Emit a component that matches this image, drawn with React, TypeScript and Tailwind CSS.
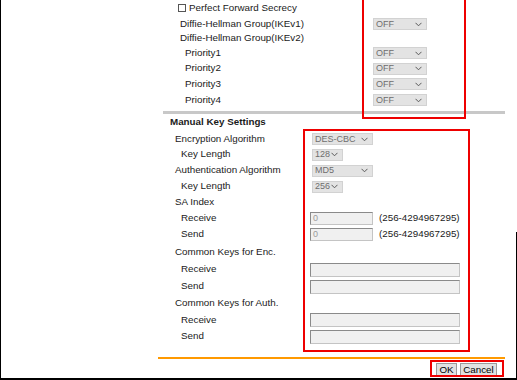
import React from 'react';

const Chevron = () => (
  <svg width="7" height="5" viewBox="0 0 7 5" className="shrink-0">
    <polyline points="0.5,0.8 3.5,3.8 6.5,0.8" fill="none" stroke="#5a5a5a" strokeWidth="1" />
  </svg>
);

function Select({ text, width }: { text: string; width: string }) {
  return (
    <div className={`${width} h-[12px] flex items-center justify-between bg-[#e3e3e3] border border-[#d2d2d2] pl-[2px] pr-[4px] text-[9px] text-[#6e6e6e] leading-none`}>
      <span>{text}</span>
      <Chevron />
    </div>
  );
}

function Input({ width, value }: { width: string; value?: string }) {
  return (
    <div className={`${width} flex items-center bg-[#f0f0f0] border border-[#8a8a8a] border-b-[#c4c4c4] border-r-[#c4c4c4] pl-[2px] text-[9px] text-[#9a9a9a] leading-none`}>
      {value}
    </div>
  );
}

function Row({ h, pad, label, bold, labelW, children }: { h: string; pad: string; label: React.ReactNode; bold?: boolean; labelW: string; children?: React.ReactNode }) {
  return (
    <div className={`flex items-center ${h}`}>
      <div className={`${labelW} ${pad} shrink-0 ${bold ? 'font-bold' : ''}`}>{label}</div>
      {children}
    </div>
  );
}

export default function App() {
  return (
    <div
      className="relative w-[517px] h-[380px] overflow-hidden bg-white border-l border-b-2 border-black text-[9.8px] text-[#1a1a1a]"
      style={{ fontFamily: '"Liberation Sans", Arial, sans-serif' }}
    >
      <div className="ml-[157px] w-[347px] flex flex-col">
        <div className="ml-[5px] flex flex-col">
          {/* IKE section */}
          <div className="flex items-center h-[16px] pl-[15px]">
            <div className="w-[8px] h-[8px] border border-[#555] mr-[3px] bg-white" />
            <span>Perfect Forward Secrecy</span>
          </div>
          <Row h="h-[16px]" pad="pl-[17px]" labelW="w-[210px]" label="Diffie-Hellman Group(IKEv1)">
            <Select text="OFF" width="w-[54px]" />
          </Row>
          <Row h="h-[13px]" pad="pl-[17px]" labelW="w-[210px]" label="Diffie-Hellman Group(IKEv2)" />
          <Row h="h-[16px]" pad="pl-[22px]" labelW="w-[210px]" label="Priority1">
            <Select text="OFF" width="w-[54px]" />
          </Row>
          <Row h="h-[15px]" pad="pl-[22px]" labelW="w-[210px]" label="Priority2">
            <Select text="OFF" width="w-[54px]" />
          </Row>
          <Row h="h-[16px]" pad="pl-[22px]" labelW="w-[210px]" label="Priority3">
            <Select text="OFF" width="w-[54px]" />
          </Row>
          <Row h="h-[16px]" pad="pl-[22px]" labelW="w-[210px]" label="Priority4">
            <Select text="OFF" width="w-[54px]" />
          </Row>

          <div className="mt-[3px] h-[3px] bg-[#c8c8c8]" />

          {/* Manual key section */}
          <Row h="h-[17px]" pad="pl-[7px]" labelW="w-[147px]" label="Manual Key Settings" bold />
          <Row h="h-[16px]" pad="pl-[12px]" labelW="w-[149px]" label="Encryption Algorithm">
            <Select text="DES-CBC" width="w-[61px]" />
          </Row>
          <Row h="h-[15px]" pad="pl-[18px]" labelW="w-[149px]" label="Key Length">
            <Select text="128" width="w-[31px]" />
          </Row>
          <Row h="h-[17px]" pad="pl-[12px]" labelW="w-[149px]" label="Authentication Algorithm">
            <Select text="MD5" width="w-[61px]" />
          </Row>
          <Row h="h-[15px]" pad="pl-[18px]" labelW="w-[149px]" label="Key Length">
            <Select text="256" width="w-[31px]" />
          </Row>
          <Row h="h-[16px]" pad="pl-[12px]" labelW="w-[147px]" label="SA Index" />
          <Row h="h-[16px]" pad="pl-[18px]" labelW="w-[147px]" label="Receive">
            <Input width="w-[63px] h-[13px]" value="0" />
            <span className="ml-[6px]">(256-4294967295)</span>
          </Row>
          <Row h="h-[17px]" pad="pl-[18px]" labelW="w-[147px]" label="Send">
            <Input width="w-[63px] h-[13px]" value="0" />
            <span className="ml-[6px]">(256-4294967295)</span>
          </Row>
          <Row h="h-[18px]" pad="pl-[12px]" labelW="w-[147px]" label="Common Keys for Enc." />
          <Row h="h-[17px]" pad="pl-[18px]" labelW="w-[147px]" label="Receive">
            <Input width="w-[150px] h-[14px]" />
          </Row>
          <Row h="h-[17px]" pad="pl-[18px]" labelW="w-[147px]" label="Send">
            <Input width="w-[150px] h-[14px]" />
          </Row>
          <Row h="h-[17px]" pad="pl-[12px]" labelW="w-[147px]" label="Common Keys for Auth." />
          <Row h="h-[16px]" pad="pl-[18px]" labelW="w-[147px]" label="Receive">
            <Input width="w-[150px] h-[14px]" />
          </Row>
          <Row h="h-[17px]" pad="pl-[18px]" labelW="w-[147px]" label="Send">
            <Input width="w-[150px] h-[14px]" />
          </Row>
        </div>

        <div className="mt-[12px] h-[2px] bg-[#ff9900]" />

        <div className="mt-[4px] flex justify-end gap-[3px] pr-[8px]">
          <button className="w-[21px] h-[13px] flex items-center justify-center bg-[#e1e1e1] border border-[#9a9a9a] leading-none text-black">OK</button>
          <button className="w-[37px] h-[13px] flex items-center justify-center bg-[#e1e1e1] border border-[#9a9a9a] leading-none text-black">Cancel</button>
        </div>
      </div>

      {/* window frame edge */}
      <div className="absolute right-0 top-[232px] bottom-0 w-px bg-black" />

      {/* annotation boxes */}
      <div className="absolute left-[361px] top-[-4px] w-[104px] h-[123px] border-2 border-[#ee0000]" />
      <div className="absolute left-[302px] top-[129px] w-[167px] h-[223px] border-2 border-[#ee0000]" />
      <div className="absolute left-[429px] top-[360px] w-[74px] h-[17px] border-2 border-[#ee0000]" />
    </div>
  );
}
